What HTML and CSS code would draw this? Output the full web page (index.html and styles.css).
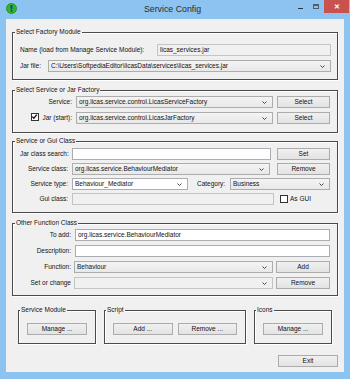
FILE: index.html
```html
<!DOCTYPE html>
<html lang="en">
<head>
    <meta charset="UTF-8">
    <title>Service Config</title>
    <link rel="stylesheet" href="styles.css">
</head>
<body>

    <div class="window">
        <!-- Title bar -->
        <div class="titlebar">
            <svg class="app-icon" width="11" height="11" viewBox="0 0 11 11">
                <circle cx="5.5" cy="5.5" r="5" fill="#2fb52f" stroke="#1d8a1d" stroke-width="0.8"/>
                <path d="M4.3 2.2h2.4l-0.5 4.2h-1.4z" fill="#1c3f8f"/>
                <circle cx="5.5" cy="8" r="0.9" fill="#1c3f8f"/>
            </svg>
            <div class="title">Service Config</div>
            <div class="win-buttons">
                <span class="wb-min"></span>
                <span class="wb-max"></span>
                <span class="wb-close">&#x2715;</span>
            </div>
        </div>

        <div class="client">

            <!-- Select Factory Module -->
            <fieldset class="group g1">
                <legend>Select Factory Module</legend>
                <div class="line">
                    <span class="lbl name-lbl">Name (load from Manage Service Module):</span>
                    <div class="field ro">licas_services.jar</div>
                </div>
                <div class="line">
                    <span class="lbl jar-lbl">Jar file:</span>
                    <div class="combo"><span>C:\Users\SoftpediaEditor\licasData\services\licas_services.jar</span><svg class="arrow" width="5" height="3" viewBox="0 0 5 3"><path d="M0.5 0.5l2 2l2-2" fill="none" stroke="#333" stroke-width="0.9"/></svg></div>
                </div>
            </fieldset>

            <!-- Select Service or Jar Factory -->
            <fieldset class="group g2">
                <legend>Select Service or Jar Factory</legend>
                <span class="lbl right">Service:</span>
                <div class="combo"><span>org.licas.service.control.LicasServiceFactory</span><svg class="arrow" width="5" height="3" viewBox="0 0 5 3"><path d="M0.5 0.5l2 2l2-2" fill="none" stroke="#333" stroke-width="0.9"/></svg></div>
                <button type="button">Select</button>

                <span class="lbl right check-lbl">
                    <span class="check on"><svg width="7" height="7" viewBox="0 0 7 7"><path d="M1.3 3.6l1.5 1.6l3-3.6" fill="none" stroke="#111" stroke-width="1.3"/></svg></span>
                    Jar (start):
                </span>
                <div class="combo"><span>org.licas.service.control.LicasJarFactory</span><svg class="arrow" width="5" height="3" viewBox="0 0 5 3"><path d="M0.5 0.5l2 2l2-2" fill="none" stroke="#333" stroke-width="0.9"/></svg></div>
                <button type="button">Select</button>
            </fieldset>

            <!-- Service or Gui Class -->
            <fieldset class="group g3">
                <legend>Service or Gui Class</legend>
                <span class="lbl right">Jar class search:</span>
                <div class="field search"></div>
                <button type="button">Set</button>

                <span class="lbl right">Service class:</span>
                <div class="combo"><span>org.licas.service.BehaviourMediator</span><svg class="arrow" width="5" height="3" viewBox="0 0 5 3"><path d="M0.5 0.5l2 2l2-2" fill="none" stroke="#333" stroke-width="0.9"/></svg></div>
                <button type="button">Remove</button>

                <span class="lbl right">Service type:</span>
                <div class="type-line">
                    <div class="combo edit type-combo"><span>Behaviour_Mediator</span><svg class="arrow" width="5" height="3" viewBox="0 0 5 3"><path d="M0.5 0.5l2 2l2-2" fill="none" stroke="#333" stroke-width="0.9"/></svg></div>
                    <span class="lbl cat-lbl">Category:</span>
                    <div class="combo cat-combo"><span>Business</span><svg class="arrow" width="5" height="3" viewBox="0 0 5 3"><path d="M0.5 0.5l2 2l2-2" fill="none" stroke="#333" stroke-width="0.9"/></svg></div>
                </div>

                <span class="lbl right">Gui class:</span>
                <div class="field ro"></div>
                <span class="lbl gui-check"><span class="check"></span>As GUI</span>
            </fieldset>

            <!-- Other Function Class -->
            <fieldset class="group g4">
                <legend>Other Function Class</legend>
                <span class="lbl right">To add:</span>
                <div class="field wide">org.licas.service.BehaviourMediator</div>

                <span class="lbl right">Description:</span>
                <div class="field wide"></div>

                <span class="lbl right">Function:</span>
                <div class="combo"><span>Behaviour</span><svg class="arrow" width="5" height="3" viewBox="0 0 5 3"><path d="M0.5 0.5l2 2l2-2" fill="none" stroke="#333" stroke-width="0.9"/></svg></div>
                <button type="button">Add</button>

                <span class="lbl right">Set or change</span>
                <div class="combo off"><span></span><svg class="arrow" width="5" height="3" viewBox="0 0 5 3"><path d="M0.5 0.5l2 2l2-2" fill="none" stroke="#333" stroke-width="0.9"/></svg></div>
                <button type="button">Remove</button>
            </fieldset>

            <!-- Bottom groups -->
            <div class="bottom-groups">
                <fieldset class="group small mod">
                    <legend>Service Module</legend>
                    <button type="button">Manage ...</button>
                </fieldset>
                <fieldset class="group small script">
                    <legend>Script</legend>
                    <button type="button">Add ...</button>
                    <button type="button">Remove ...</button>
                </fieldset>
                <fieldset class="group small icons">
                    <legend>Icons</legend>
                    <button type="button">Manage ...</button>
                </fieldset>
            </div>

            <div class="exit-line">
                <button type="button">Exit</button>
            </div>
        </div>
    </div>

</body>
</html>
```

FILE: styles.css
```css
/* Window frame */
* {
    box-sizing: border-box;
    margin: 0;
    padding: 0;
}
body {
    font-family: "Liberation Sans", Arial, sans-serif;
    font-size: 6.5px;
    color: #111;
    background-color: #8dc3f1;
}
.window {
    width: 350px;
    height: 379px;
    background-color: #8dc3f1;
    padding: 0 6px 7px 6px;
    display: flex;
    flex-direction: column;
}
.titlebar {
    height: 19px;
    position: relative;
    display: flex;
    align-items: center;
}
.app-icon {
    margin-left: 0;
    margin-top: -2px;
}
.title {
    flex: 1;
    text-align: center;
    font-size: 8.8px;
    color: #2b2b2b;
    margin-top: -2px;
    padding-left: 30px;
}
.win-buttons {
    display: flex;
    align-items: flex-start;
    align-self: flex-start;
    margin-right: -5px;
}
.wb-min {
    width: 5px;
    height: 1px;
    background-color: #333;
    margin-top: 8px;
    margin-right: 10px;
}
.wb-max {
    width: 6px;
    height: 5px;
    border: 1px solid #333;
    border-top-width: 2px;
    margin-top: 4px;
    margin-right: 5px;
    opacity: 0.7;
}
.wb-close {
    width: 25px;
    height: 13px;
    background-color: #c9524f;
    color: #fff;
    font-size: 7px;
    font-weight: bold;
    line-height: 13px;
    text-align: center;
}
.client {
    flex: 1;
    background-color: #f0f0f0;
    padding: 9px 6px 0 6px;
}

/* Titled groups */
.group {
    border: 1px solid #4a4a4a;
    box-shadow: inset 1px 1px 0 #fff, 1px 1px 0 #fff;
    min-width: 0;
}
.group legend {
    font-size: 6.5px;
    line-height: 8px;
    padding: 0 1px;
    margin-left: -5px;
    color: #111;
}
.lbl {
    line-height: 12px;
    white-space: nowrap;
}
.right {
    text-align: right;
}

/* Inputs */
.field,
.combo {
    height: 12px;
    line-height: 10px;
    padding-left: 2px;
    white-space: nowrap;
    overflow: hidden;
}
.field {
    background-color: #fff;
    border: 1px solid #abadb3;
}
.field.ro {
    background-color: #f0f0f0;
    border-color: #c4c4c4;
}
.combo {
    display: flex;
    align-items: center;
    background: linear-gradient(#f4f4f4, #e8e8e8);
    border: 1px solid #adadad;
}
.combo span {
    flex: 1;
    overflow: hidden;
}
.combo.edit {
    background: #fff;
    border-color: #abadb3;
}
.combo.off {
    background: #f0f0f0;
    border-color: #c4c4c4;
}
.arrow {
    margin: 0 5px 0 3px;
    flex: none;
}
button {
    height: 12px;
    font-family: "Liberation Sans", Arial, sans-serif;
    font-size: 6.5px;
    color: #111;
    background: linear-gradient(#f0f0f0, #e3e3e3);
    border: 1px solid #acacac;
    line-height: 10px;
}
.check {
    display: inline-block;
    width: 7px;
    height: 7px;
    border: 1px solid #333;
    background-color: #fff;
    vertical-align: -1px;
    position: relative;
}
.check svg {
    position: absolute;
    left: -1px;
    top: -1px;
}

/* Select Factory Module */
.g1 {
    padding: 8px 6px 7px 7px;
}
.g1 .line {
    display: flex;
    margin-bottom: 4px;
}
.g1 .line:last-child {
    margin-bottom: 0;
}
.name-lbl {
    width: 137px;
}
.jar-lbl {
    width: 28px;
}
.g1 .field,
.g1 .combo {
    flex: 1;
}

/* Select Service or Jar Factory */
.g2 {
    margin-top: 6px;
    padding: 2px 7px 8px 7px;
    display: grid;
    grid-template-columns: 52px 1fr 53px;
    column-gap: 4px;
    row-gap: 4px;
}
.check-lbl .check {
    width: 8px;
    height: 8px;
    margin-right: 2px;
}

/* Service or Gui Class */
.g3 {
    margin-top: 4px;
    padding: 3px 7px 7px 7px;
    display: grid;
    grid-template-columns: 49px 1fr 53px;
    column-gap: 3px;
    row-gap: 3px;
}
.g3 .right {
    padding-right: 1px;
}
.field.search {
    margin-right: 3px;
}
.g3 .combo {
    margin-right: 4px;
}
.type-line {
    grid-column: 2 / 4;
    display: flex;
}
.g3 .type-combo {
    width: 116px;
    margin-right: 0;
}
.cat-lbl {
    margin-left: 9px;
    width: 33px;
}
.g3 .cat-combo {
    flex: 1;
    margin-right: 0;
}
.g3 .field.ro {
    margin-right: 0;
}
.gui-check {
    padding-left: 3px;
}
.gui-check .check {
    width: 8px;
    height: 8px;
    margin-right: 2px;
    vertical-align: -2px;
}

/* Other Function Class */
.g4 {
    margin-top: 6px;
    padding: 2px 7px 6px 7px;
    display: grid;
    grid-template-columns: 51px 1fr 54px;
    column-gap: 3px;
    row-gap: 4px;
}
.field.wide {
    grid-column: 2 / 4;
    margin-left: 1px;
}

/* Bottom groups */
.bottom-groups {
    display: flex;
    gap: 8px;
    margin-top: 10px;
    padding-left: 6px;
}
.small {
    padding: 9px 8px 8px 8px;
    display: flex;
    gap: 5px;
}
.small legend {
    margin-left: -7px;
}
.small button {
    width: 60px;
}
.mod,
.icons {
    width: 78px;
}
.script {
    width: 142px;
}
.exit-line {
    display: flex;
    justify-content: flex-end;
    margin-top: 11px;
}
.exit-line button {
    width: 60px;
}
```
